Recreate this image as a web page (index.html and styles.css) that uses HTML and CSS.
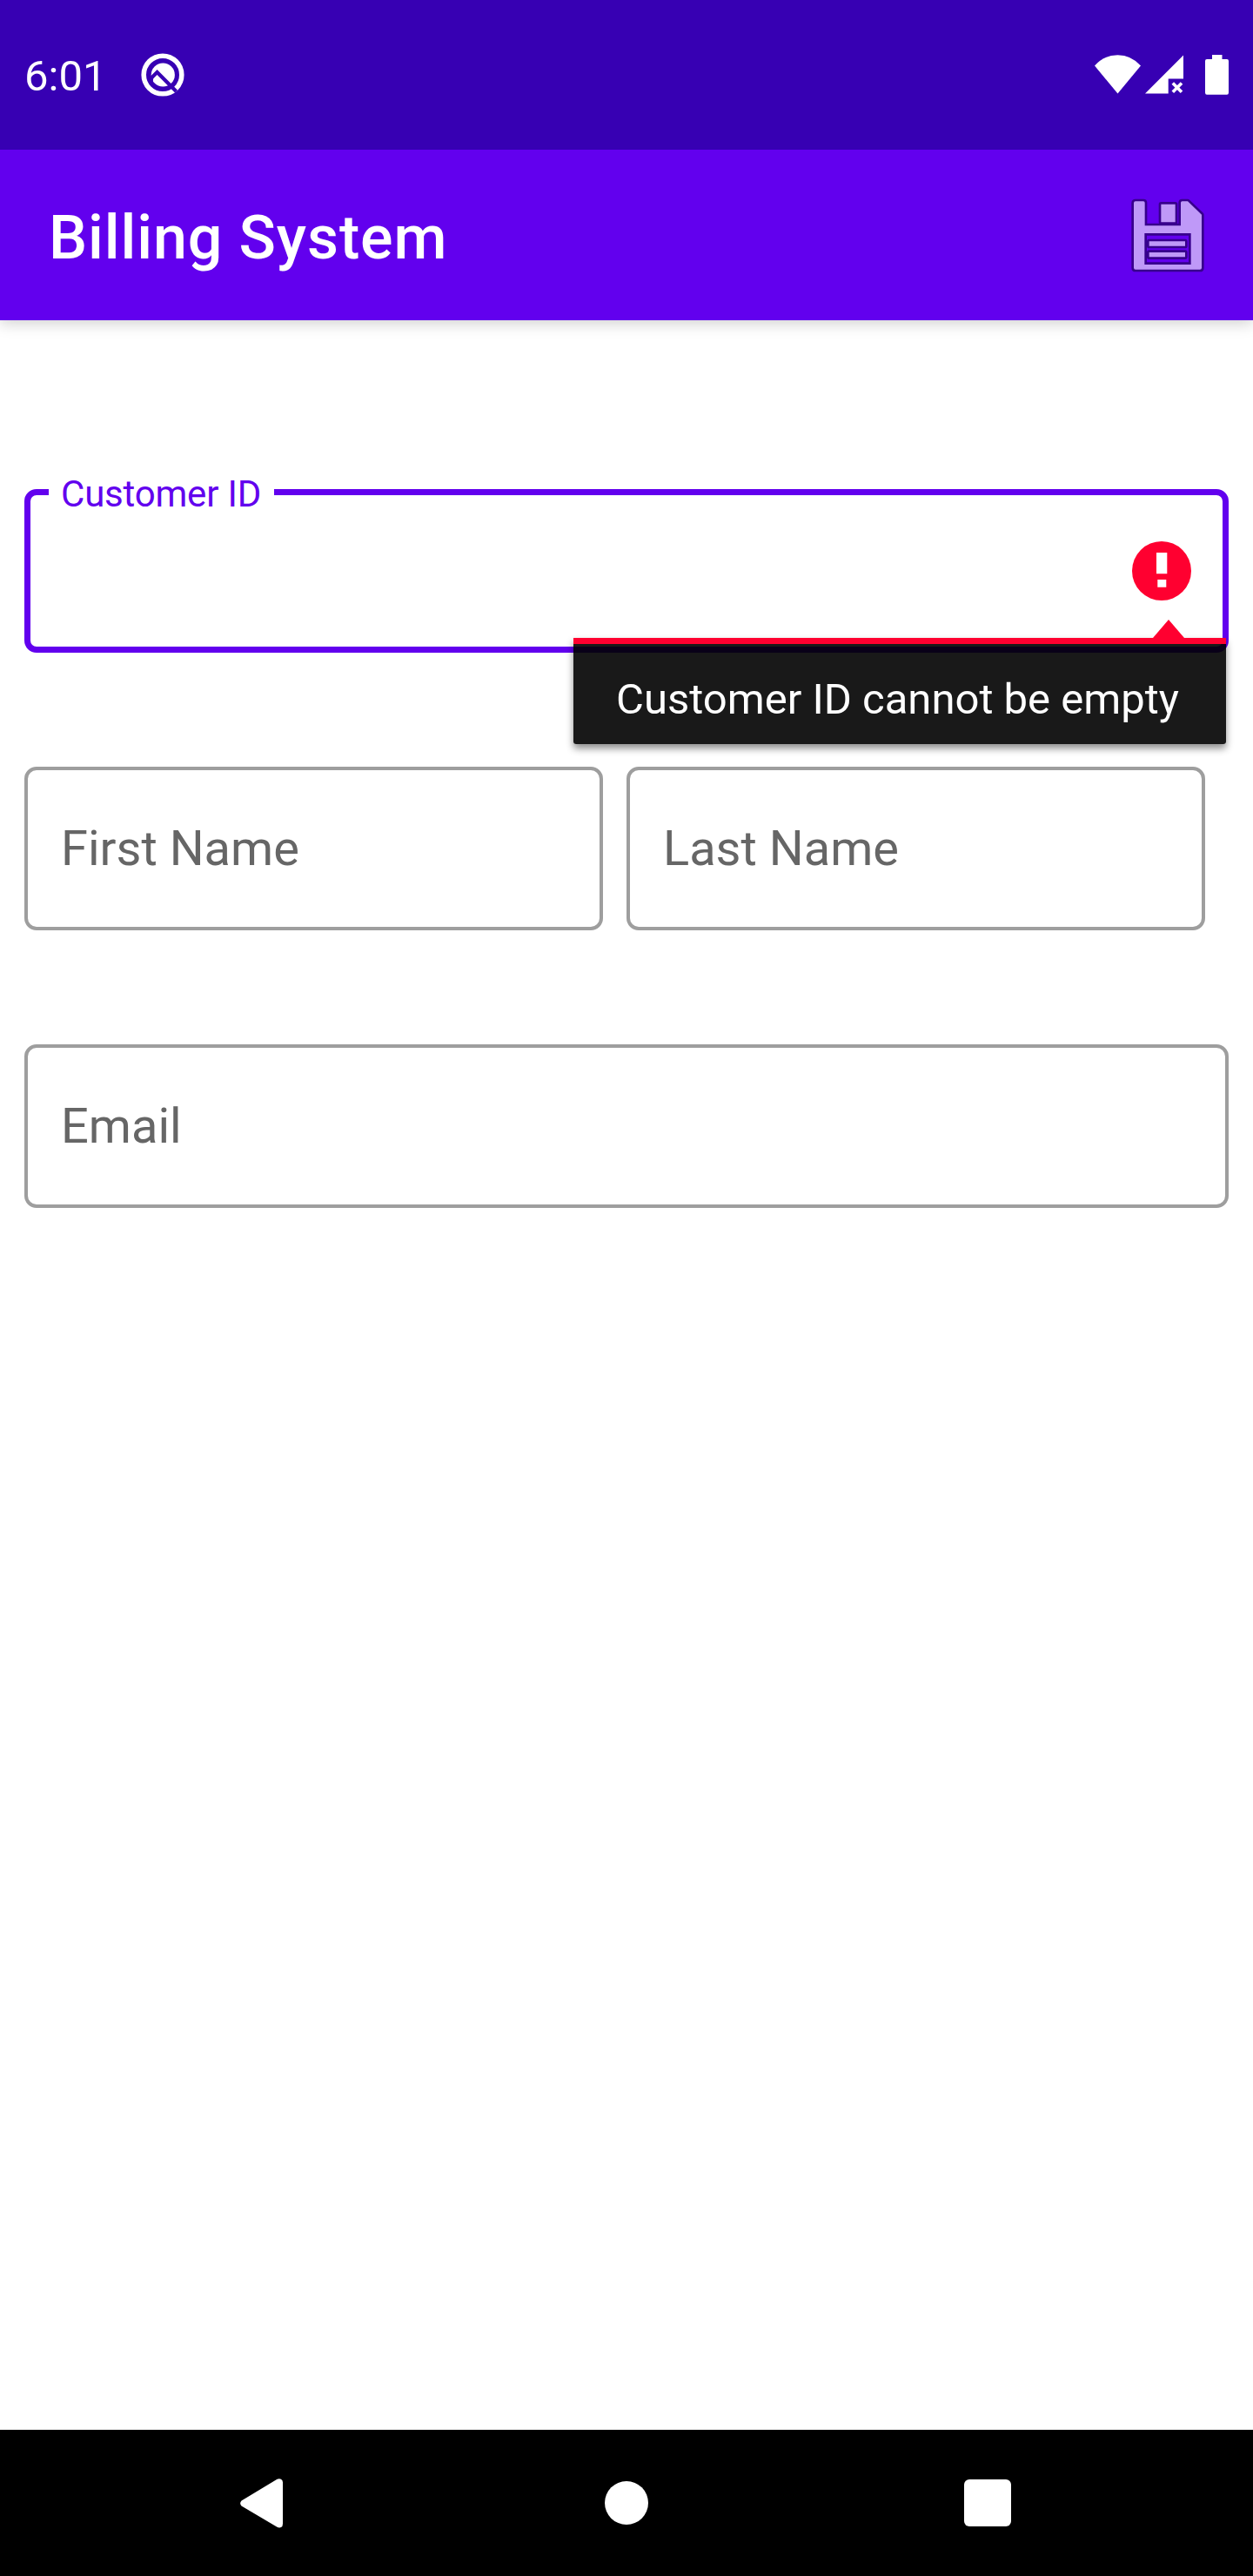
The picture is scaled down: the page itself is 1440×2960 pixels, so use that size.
FILE: index.html
```html
<!DOCTYPE html>
<html lang="en">
<head>
<meta charset="utf-8">
<title>Billing System</title>
<link rel="stylesheet" href="styles.css">
</head>
<body>
<div class="screen">
  <header class="status-bar">
    <span class="clock">6:01</span>
    <svg class="q-icon" viewBox="0 0 50 50">
      <circle cx="25" cy="25" r="21.8" fill="none" stroke="#fff" stroke-width="5.6"/>
      <circle cx="25.3" cy="25" r="13.6" fill="#fff"/>
      <path d="M10 30.500L18.600 22L40.500 44" fill="none" stroke="#3700b3" stroke-width="4.200"/>
      <path d="M10 31L14.500 26.500L13.600 34Z" fill="#3700b3"/>
    </svg>
    <div class="status-icons">
      <svg class="wifi" viewBox="0 0 53 45"><path d="M0 12.500Q11 .2 26.500 .2T53 12.500L26.500 44.500Z" fill="#fff"/></svg>
      <svg class="signal" viewBox="0 0 44 45"><path d="M44 .5V27.500H26.700V44.500H0Z" fill="#fff"/><path d="M31.800 32.500L42 42.800M42 32.500L31.800 42.800" stroke="#fff" stroke-width="3.600"/></svg>
      <svg class="battery" viewBox="0 0 27 46"><path d="M8 0H19.500V5H25Q27 5 27 7V43.500Q27 45.700 25 45.700H2Q0 45.700 0 43.500V7Q0 5 2 5H8Z" fill="#fff"/></svg>
    </div>
  </header>
  <div class="app-bar">
    <h1 class="title">Billing System</h1>
    <svg class="save" viewBox="90 84 252 255">
      <path class="save-shape" fill-rule="evenodd" d="M105 94H132Q137 94 137 99V178H261V99Q261 94 266 94H285L333 140V323Q333 329 327 329H105Q99 329 99 323V100Q99 94 105 94ZM136 204V312H296V204Z"/>
      <path class="save-shape" d="M193 104H242V166H193ZM152 232H276V248H152ZM152 270H276V286H152Z"/>
    </svg>
  </div>
  <main class="form">
    <div class="field focused">
      <span class="floating">Customer ID</span>
      <svg class="error-icon" viewBox="0 0 68 68"><circle cx="34" cy="34" r="34" fill="#ff0030"/><path d="M28 13H40.300V37.300H28ZM29.300 44H39.300V52.700H29.300Z" fill="#fff"/></svg>
      <div class="popup">
        <svg class="arrow" viewBox="0 0 36 21"><path d="M0 21L18 0L36 21Z" fill="#ff0030"/></svg>
        <span>Customer ID cannot be empty</span>
      </div>
    </div>
    <div class="names">
      <div class="field"><span>First Name</span></div>
      <div class="field"><span>Last Name</span></div>
    </div>
    <div class="field"><span>Email</span></div>
  </main>
  <nav class="nav-bar">
    <svg class="nav-back" viewBox="0 0 49 57"><path d="M42.500 .8Q45 -.5 47 .8Q49 2 49 4.500V52Q49 55 47 56Q45 57 42.500 55.800L1.500 31.500Q-1.200 28.500 1.500 25.500Z" fill="#fff"/></svg>
    <span class="nav-home"></span>
    <span class="nav-recent"></span>
  </nav>
</div>
</body>
</html>
```
FILE: styles.css
```css
* { box-sizing: border-box; }
body {
  margin: 0;
  background: #fff;
  font-family: Roboto, "Noto Sans", sans-serif;
}
svg { display: block; flex: none; }
.screen {
  width: 1440px;
  height: 2960px;
  display: flex;
  flex-direction: column;
}
.status-bar {
  position: relative;
  z-index: 1;
  height: 172px;
  padding: 0 28px;
  background: #3700b3;
  color: #fff;
  display: flex;
  align-items: center;
}
.clock { width: 134px; font-size: 49px; line-height: 58px; padding-top: 4px; }
.q-icon { width: 50px; height: 50px; }
.status-icons { margin-left: auto; display: flex; align-items: flex-start; }
.wifi { width: 53px; height: 45px; margin-right: 5px; }
.signal { width: 44px; height: 45px; margin-right: 25px; }
.battery { width: 27px; height: 46px; }
.app-bar {
  height: 196px;
  padding: 0 56px;
  background: #6200ee;
  color: #fff;
  display: flex;
  align-items: center;
  justify-content: space-between;
  box-shadow: 0 4px 16px rgba(0, 0, 0, .18);
}
.title {
  margin: 0;
  padding-top: 6px;
  font-size: 70px;
  line-height: 82px;
  font-weight: 500;
  letter-spacing: .0125em;
}
.save { width: 84px; height: 85px; overflow: visible; }
.save-shape {
  fill: #bf99f8;
  stroke: #37008c;
  stroke-width: 16px;
  stroke-linejoin: round;
  paint-order: stroke;
}
.form {
  flex: 1;
  padding: 194px 28px 0;
  display: flex;
  flex-direction: column;
}
.field {
  position: relative;
  height: 188px;
  padding: 0 38px;
  border: 4px solid #9e9e9e;
  border-radius: 14px;
  display: flex;
  align-items: center;
  color: #666;
  font-size: 56px;
  line-height: 66px;
}
.field.focused {
  border: 7px solid #6200ee;
  padding-right: 36px;
  justify-content: flex-end;
}
.floating {
  position: absolute;
  left: 21px;
  top: -26px;
  width: 259px;
  padding-left: 14px;
  background: #fff;
  color: #6200ee;
  font-size: 42px;
  line-height: 50px;
  letter-spacing: -.2px;
  white-space: nowrap;
}
.error-icon { width: 68px; height: 68px; }
.popup {
  position: absolute;
  z-index: 1;
  left: 624px;
  top: 164px;
  width: 750px;
  height: 122px;
  padding: 35px 49px 0;
  border-top: 7px solid #ff0030;
  border-radius: 0 0 3px 3px;
  background: rgba(0, 0, 0, .9);
  background-clip: padding-box;
  box-shadow: 0 5px 9px rgba(0, 0, 0, .45);
  color: #fff;
  font-size: 49px;
  line-height: 58px;
  white-space: nowrap;
}
.arrow { position: absolute; left: 666px; top: -28px; width: 36px; height: 21px; }
.names {
  margin: 131px 27px 131px 0;
  display: grid;
  grid-template-columns: 1fr 1fr;
  gap: 27px;
}
.nav-bar {
  height: 168px;
  padding: 0 278px 0 276px;
  background: #000;
  display: flex;
  align-items: center;
  justify-content: space-between;
}
.nav-back { width: 49px; height: 57px; }
.nav-home { width: 50px; height: 50px; margin-left: 7px; border-radius: 50%; background: #fff; }
.nav-recent { width: 54px; height: 54px; border-radius: 6px; background: #fff; }
```
